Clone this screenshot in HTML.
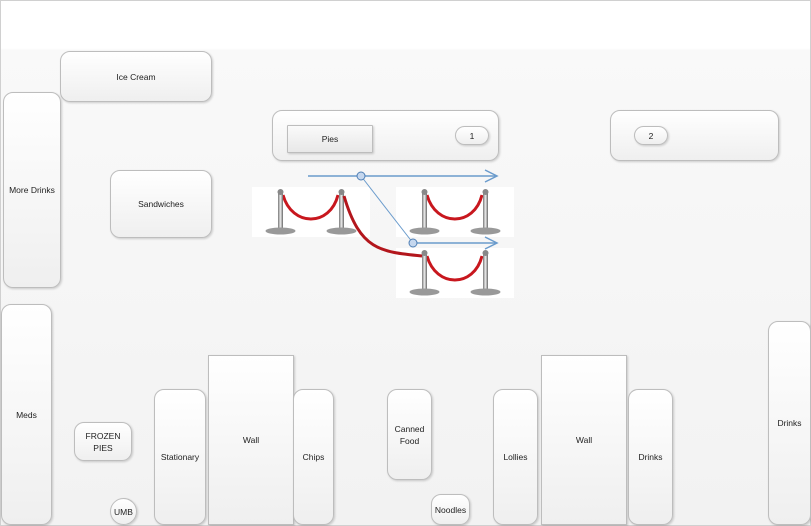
<!DOCTYPE html>
<html><head><meta charset="utf-8"><style>
html,body{margin:0;padding:0}
body{width:811px;height:526px;position:relative;overflow:hidden;background:#fff;font-family:"Liberation Sans",sans-serif}
#bg{position:absolute;left:0;top:0;width:809px;height:524px;border:1px solid #d0d0d0;background:linear-gradient(#ffffff 0px,#ffffff 47px,#f9f9f9 49px,#f2f2f2 526px)}
.b{position:absolute;box-sizing:border-box;border:1px solid #bdbdbd;border-radius:10px;background:linear-gradient(#ffffff,#efefef);box-shadow:1px 1px 2px rgba(0,0,0,.18);display:flex;align-items:center;justify-content:center;text-align:center;font-size:8.5px;color:#222;line-height:12px}
.sq{border-radius:0}
</style></head><body>
<div id="bg"></div>
<div class="b" style="left:60px;top:51px;width:152px;height:51px">Ice Cream</div>
<div class="b" style="left:3px;top:92px;width:58px;height:196px">More Drinks</div>
<div class="b" style="left:272px;top:110px;width:227px;height:51px"></div>
<div class="b sq" style="left:287px;top:125px;width:86px;height:28px;border-radius:1px;background:linear-gradient(#fafafa,#e8e8e8)">Pies</div>
<div class="b" style="left:455px;top:126px;width:34px;height:19px;border-radius:10px">1</div>
<div class="b" style="left:610px;top:110px;width:169px;height:51px"></div>
<div class="b" style="left:634px;top:126px;width:34px;height:19px;border-radius:10px">2</div>
<div class="b" style="left:110px;top:170px;width:102px;height:68px">Sandwiches</div>
<div class="b" style="left:1px;top:304px;width:51px;height:221px">Meds</div>
<div class="b" style="left:74px;top:422px;width:58px;height:39px">FROZEN<br>PIES</div>
<div class="b" style="left:110px;top:498px;width:27px;height:27px;border-radius:50%">UMB</div>
<div class="b" style="left:154px;top:389px;width:52px;height:136px">Stationary</div>
<div class="b sq" style="left:208px;top:355px;width:86px;height:170px">Wall</div>
<div class="b" style="left:293px;top:389px;width:41px;height:136px">Chips</div>
<div class="b" style="left:387px;top:389px;width:45px;height:91px">Canned<br>Food</div>
<div class="b" style="left:431px;top:494px;width:39px;height:31px">Noodles</div>
<div class="b" style="left:493px;top:389px;width:45px;height:136px">Lollies</div>
<div class="b sq" style="left:541px;top:355px;width:86px;height:170px">Wall</div>
<div class="b" style="left:628px;top:389px;width:45px;height:136px">Drinks</div>
<div class="b" style="left:768px;top:321px;width:43px;height:204px">Drinks</div>
<svg width="811" height="526" style="position:absolute;left:0;top:0">
<defs>
<linearGradient id="pole" x1="0" x2="1"><stop offset="0" stop-color="#777"/><stop offset=".5" stop-color="#eee"/><stop offset="1" stop-color="#666"/></linearGradient>
<g id="st">
<rect x="0" y="0" width="118" height="50" fill="#fff"/>
<path d="M31 8 C40 40 78 40 86 8" stroke="#c8171e" stroke-width="3" fill="none"/>
<rect x="26" y="4" width="5" height="38" fill="url(#pole)"/>
<rect x="87" y="4" width="5" height="38" fill="url(#pole)"/>
<ellipse cx="28.5" cy="44" rx="15" ry="3.5" fill="#999"/>
<ellipse cx="89.5" cy="44" rx="15" ry="3.5" fill="#999"/>
<circle cx="28.5" cy="5" r="3" fill="#888"/>
<circle cx="89.5" cy="5" r="3" fill="#888"/>
</g>
</defs>
<use href="#st" x="252" y="187"/>
<use href="#st" x="396" y="187"/>
<use href="#st" x="396" y="248"/>
<path d="M344 196 C360 250 380 252 422 256" stroke="#b3161c" stroke-width="3" fill="none"/>
<line x1="308" y1="176" x2="496" y2="176" stroke="#6a9bcc" stroke-width="1.5"/>
<path d="M485 170 L497 176 L485 182" stroke="#6a9bcc" stroke-width="1.5" fill="none"/>
<line x1="361" y1="176" x2="413" y2="243" stroke="#6a9bcc" stroke-width="1"/>
<line x1="413" y1="243" x2="496" y2="243" stroke="#6a9bcc" stroke-width="1.5"/>
<path d="M485 237 L497 243 L485 249" stroke="#6a9bcc" stroke-width="1.5" fill="none"/>
<circle cx="361" cy="176" r="4" fill="#c5d7ee" stroke="#4f7fb5"/>
<circle cx="413" cy="243" r="4" fill="#c5d7ee" stroke="#4f7fb5"/>
</svg>
</body></html>
